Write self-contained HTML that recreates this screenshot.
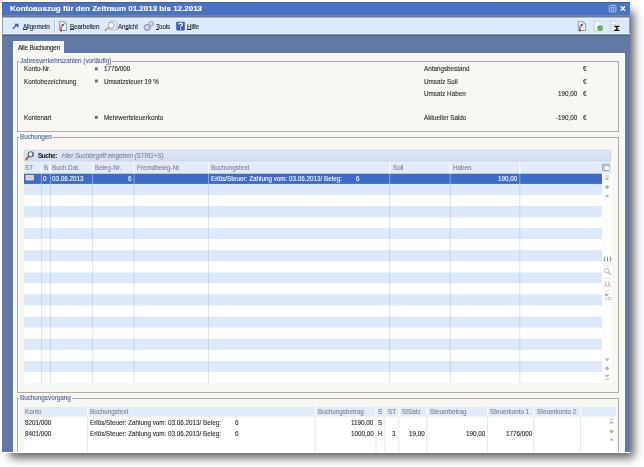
<!DOCTYPE html>
<html><head><meta charset="utf-8">
<style>
html,body{margin:0;padding:0}
body{width:644px;height:467px;background:#fff;position:relative;overflow:hidden;font-family:"Liberation Sans",sans-serif;font-size:6.3px;color:#333}
.a{position:absolute}
.t{position:absolute;white-space:pre;line-height:1;font-size:6.3px;-webkit-text-stroke:0.12px currentColor;will-change:transform}
u{text-decoration-thickness:0.6px;text-underline-offset:0.3px}
.l{-webkit-text-stroke:0.08px currentColor}
</style></head><body>
<div class="a" style="left:10px;top:11px;width:624px;height:447px;background:rgba(0,0,0,.62);filter:blur(5px)"></div>
<div class="a" style="left:2px;top:2px;width:628px;height:451px;background:#6279a8;"></div>
<div class="a" style="left:2px;top:452px;width:628px;height:1px;background:#fbfbfb;"></div>
<div class="a" style="left:2px;top:2px;width:628px;height:14px;background:linear-gradient(#4873c8,#4a72c5);"></div>
<div class="a" style="left:2px;top:2px;width:628px;height:1px;background:#4062ac;"></div>
<div class="a" style="left:2px;top:15px;width:628px;height:1px;background:#6a84bd;"></div>
<div class="a" style="left:2px;top:16px;width:628px;height:1px;background:#687a9f;"></div>
<div class="a" style="left:2px;top:17px;width:628px;height:1px;background:#a2b1c9;"></div>
<div class="t" style="top:5.13px;left:10.00px;font-size:8px;color:#fff;font-weight:bold;">Kontoauszug für den Zeitraum 01.2013 bis 12.2013</div>
<div class="a" style="left:2px;top:18px;width:628px;height:16px;background:#dcebfb;"></div>
<div class="a" style="left:2px;top:18px;width:628px;height:1px;background:#e9f5fd;"></div>
<div class="a" style="left:2px;top:17px;width:1px;height:19px;background:#8d9dc4;"></div>
<div class="a" style="left:629px;top:17px;width:1px;height:19px;background:#8d9dc4;"></div>
<div class="a" style="left:2px;top:33px;width:628px;height:1px;background:#eef7fe;"></div>
<div class="a" style="left:2px;top:34px;width:628px;height:1px;background:#7f93bb;"></div>
<div class="a" style="left:2px;top:35px;width:628px;height:1px;background:#4d6594;"></div>
<div class="a" style="left:54px;top:19px;width:1px;height:13px;background:#b3bfd3;"></div>
<div class="a" style="left:55px;top:19px;width:1px;height:13px;background:#f5f9ff;"></div>
<div class="t" style="top:23.57px;left:22.80px;color:#2a2a2a;letter-spacing:-0.12px;"><u>A</u>llgemein</div>
<div class="t" style="top:23.57px;left:70.00px;color:#2a2a2a;letter-spacing:-0.12px;"><u>B</u>earbeiten</div>
<div class="t" style="top:23.57px;left:118.00px;color:#2a2a2a;letter-spacing:-0.12px;">An<u>s</u>icht</div>
<div class="t" style="top:23.57px;left:156.30px;color:#2a2a2a;letter-spacing:-0.12px;"><u>T</u>ools</div>
<div class="t" style="top:23.57px;left:187.20px;color:#2a2a2a;letter-spacing:-0.12px;"><u>H</u>ilfe</div>
<div class="a" style="left:13px;top:41px;width:51px;height:13px;background:#f8f7f2;border-top:1px solid #fff;border-left:1px solid #fff;box-sizing:border-box"></div>
<div class="t" style="top:45.17px;left:18.20px;color:#222;letter-spacing:-0.15px;">Alle Buchungen</div>
<div class="a" style="left:13px;top:53px;width:611.5px;height:399px;background:#f8f7f2;border-left:1px solid #fdfdfc;border-right:1px solid #fff;box-sizing:border-box"></div>
<div class="a" style="left:64px;top:53px;width:560px;height:1px;background:#fdfdfb;"></div>
<div class="a" style="left:17px;top:61px;width:602px;height:71px;background:transparent;border:1px solid #aeaca4;box-sizing:border-box;"></div>
<div class="t l" style="top:58.17px;left:18.80px;color:#3b5eab;background:#f8f7f2;padding:0 1px 0 1px;">Jahresverkehrszahlen (vorläufig)</div>
<div class="t" style="top:66.27px;left:24.00px;color:#303030;">Konto-Nr.</div>
<div class="t" style="top:66.27px;left:103.60px;color:#303030;">1776/000</div>
<div class="t" style="top:79.07px;left:24.00px;color:#303030;">Kontobezeichnung</div>
<div class="t" style="top:79.07px;left:103.60px;color:#303030;">Umsatzsteuer 19 %</div>
<div class="t" style="top:115.07px;left:24.00px;color:#303030;">Kontenart</div>
<div class="t" style="top:115.07px;left:103.60px;color:#303030;">Mehrwertsteuerkonto</div>
<div class="t" style="top:66.27px;left:424.00px;color:#303030;">Anfangsbestand</div>
<div class="t" style="top:66.27px;left:582.50px;color:#303030;">€</div>
<div class="t" style="top:79.07px;left:424.00px;color:#303030;">Umsatz Soll</div>
<div class="t" style="top:79.07px;left:582.50px;color:#303030;">€</div>
<div class="t" style="top:91.07px;left:424.00px;color:#303030;">Umsatz Haben</div>
<div class="t" style="top:91.07px;left:582.50px;color:#303030;">€</div>
<div class="t" style="top:91.07px;right:67.00px;text-align:right;color:#303030;">190,00</div>
<div class="t" style="top:115.07px;left:424.00px;color:#303030;">Aktueller Saldo</div>
<div class="t" style="top:115.07px;left:582.50px;color:#303030;">€</div>
<div class="t" style="top:115.07px;right:67.00px;text-align:right;color:#303030;">-190,00</div>
<div class="a" style="left:17px;top:137px;width:602px;height:256px;background:transparent;border:1px solid #aeaca4;box-sizing:border-box;"></div>
<div class="t l" style="top:134.17px;left:18.60px;color:#3b5eab;background:#f8f7f2;padding:0 1px 0 1px;">Buchungen</div>
<div class="a" style="left:17px;top:398px;width:602px;height:54px;background:transparent;border:1px solid #aeaca4;box-sizing:border-box;border-bottom:none;"></div>
<div class="t l" style="top:395.17px;left:18.70px;color:#3b5eab;background:#f8f7f2;padding:0 1px 0 1px;">Buchungsvorgang</div>
<svg class="a" style="left:0;top:0" width="644" height="467" viewBox="0 0 644 467"><rect x="94.9" y="67.4" width="2.9" height="2.9" fill="#6a6a6a"/><rect x="94.9" y="79.5" width="2.9" height="2.9" fill="#6a6a6a"/><rect x="94.9" y="115.9" width="2.9" height="2.9" fill="#6a6a6a"/><defs><linearGradient id="sg" x1="0" y1="0" x2="0" y2="1"><stop offset="0" stop-color="#dfe8f8"/><stop offset="1" stop-color="#d3def3"/></linearGradient></defs><rect x="24.2" y="150.2" width="586.5" height="10.9" fill="url(#sg)" stroke="#c2d0ea" stroke-width="0.8"/><rect x="602" y="162" width="10" height="221" fill="#fdfdfc"/><rect x="24" y="162.2" width="587" height="11.5" fill="#e0ebfb"/><rect x="24" y="173.7" width="578" height="10.26" fill="#3e6bc7"/><rect x="24" y="183.96" width="578" height="11.057" fill="#dce9fb"/><rect x="24" y="195.01" width="578" height="11.057" fill="#ffffff"/><rect x="24" y="206.07" width="578" height="11.057" fill="#dce9fb"/><rect x="24" y="217.13" width="578" height="11.057" fill="#ffffff"/><rect x="24" y="228.19" width="578" height="11.057" fill="#dce9fb"/><rect x="24" y="239.24" width="578" height="11.057" fill="#ffffff"/><rect x="24" y="250.30" width="578" height="11.057" fill="#dce9fb"/><rect x="24" y="261.36" width="578" height="11.057" fill="#ffffff"/><rect x="24" y="272.41" width="578" height="11.057" fill="#dce9fb"/><rect x="24" y="283.47" width="578" height="11.057" fill="#ffffff"/><rect x="24" y="294.53" width="578" height="11.057" fill="#dce9fb"/><rect x="24" y="305.58" width="578" height="11.057" fill="#ffffff"/><rect x="24" y="316.64" width="578" height="11.057" fill="#dce9fb"/><rect x="24" y="327.70" width="578" height="11.057" fill="#ffffff"/><rect x="24" y="338.75" width="578" height="11.057" fill="#dce9fb"/><rect x="24" y="349.81" width="578" height="11.057" fill="#ffffff"/><rect x="24" y="360.87" width="578" height="11.057" fill="#dce9fb"/><rect x="24" y="371.93" width="578" height="11.057" fill="#ffffff"/><rect x="40.80" y="162.5" width="1.2" height="11" fill="#fdfeff"/><rect x="40.90" y="183.96" width="1" height="199.14" fill="rgba(110,140,195,.22)"/><rect x="40.90" y="173.7" width="1" height="10.26" fill="#86a3dc"/><rect x="49.80" y="162.5" width="1.2" height="11" fill="#fdfeff"/><rect x="49.90" y="183.96" width="1" height="199.14" fill="rgba(110,140,195,.22)"/><rect x="49.90" y="173.7" width="1" height="10.26" fill="#86a3dc"/><rect x="91.85" y="162.5" width="1.2" height="11" fill="#fdfeff"/><rect x="91.95" y="183.96" width="1" height="199.14" fill="rgba(110,140,195,.22)"/><rect x="91.95" y="173.7" width="1" height="10.26" fill="#86a3dc"/><rect x="133.50" y="162.5" width="1.2" height="11" fill="#fdfeff"/><rect x="133.60" y="183.96" width="1" height="199.14" fill="rgba(110,140,195,.22)"/><rect x="133.60" y="173.7" width="1" height="10.26" fill="#86a3dc"/><rect x="207.90" y="162.5" width="1.2" height="11" fill="#fdfeff"/><rect x="208.00" y="183.96" width="1" height="199.14" fill="rgba(110,140,195,.22)"/><rect x="208.00" y="173.7" width="1" height="10.26" fill="#86a3dc"/><rect x="389.00" y="162.5" width="1.2" height="11" fill="#fdfeff"/><rect x="389.10" y="183.96" width="1" height="199.14" fill="rgba(110,140,195,.22)"/><rect x="389.10" y="173.7" width="1" height="10.26" fill="#86a3dc"/><rect x="449.60" y="162.5" width="1.2" height="11" fill="#fdfeff"/><rect x="449.70" y="183.96" width="1" height="199.14" fill="rgba(110,140,195,.22)"/><rect x="449.70" y="173.7" width="1" height="10.26" fill="#86a3dc"/><rect x="519.20" y="162.5" width="1.2" height="11" fill="#fdfeff"/><rect x="519.30" y="183.96" width="1" height="199.14" fill="rgba(110,140,195,.22)"/><rect x="519.30" y="173.7" width="1" height="10.26" fill="#86a3dc"/><rect x="24" y="407" width="592" height="9.8" fill="#e0ebfb"/><rect x="24" y="416.8" width="592" height="36" fill="#ffffff"/><rect x="87.00" y="407.2" width="1.2" height="9.6" fill="#fdfeff"/><rect x="87.10" y="416.8" width="1" height="35.2" fill="#e0e7f3"/><rect x="314.70" y="407.2" width="1.2" height="9.6" fill="#fdfeff"/><rect x="314.80" y="416.8" width="1" height="35.2" fill="#e0e7f3"/><rect x="375.40" y="407.2" width="1.2" height="9.6" fill="#fdfeff"/><rect x="375.50" y="416.8" width="1" height="35.2" fill="#e0e7f3"/><rect x="384.30" y="407.2" width="1.2" height="9.6" fill="#fdfeff"/><rect x="384.40" y="416.8" width="1" height="35.2" fill="#e0e7f3"/><rect x="398.20" y="407.2" width="1.2" height="9.6" fill="#fdfeff"/><rect x="398.30" y="416.8" width="1" height="35.2" fill="#e0e7f3"/><rect x="426.20" y="407.2" width="1.2" height="9.6" fill="#fdfeff"/><rect x="426.30" y="416.8" width="1" height="35.2" fill="#e0e7f3"/><rect x="487.00" y="407.2" width="1.2" height="9.6" fill="#fdfeff"/><rect x="487.10" y="416.8" width="1" height="35.2" fill="#e0e7f3"/><rect x="533.10" y="407.2" width="1.2" height="9.6" fill="#fdfeff"/><rect x="533.20" y="416.8" width="1" height="35.2" fill="#e0e7f3"/><rect x="580.00" y="407.2" width="1.2" height="9.6" fill="#fdfeff"/><rect x="580.10" y="416.8" width="1" height="35.2" fill="#e0e7f3"/></svg>
<div class="t l" style="top:165.07px;left:25.40px;color:#7b7f87;">ST</div>
<div class="t l" style="top:165.07px;left:43.80px;color:#7b7f87;">B</div>
<div class="t l" style="top:165.07px;left:52.20px;color:#7b7f87;">Buch.Dat.</div>
<div class="t l" style="top:165.07px;left:95.00px;color:#7b7f87;">Beleg-Nr.</div>
<div class="t l" style="top:165.07px;left:137.20px;color:#7b7f87;">Fremdbeleg-Nr.</div>
<div class="t l" style="top:165.07px;left:211.00px;color:#7b7f87;">Buchungstext</div>
<div class="t l" style="top:165.07px;left:393.00px;color:#7b7f87;">Soll</div>
<div class="t l" style="top:165.07px;left:452.70px;color:#7b7f87;">Haben</div>
<div class="t l" style="top:152.57px;left:38.30px;color:#1e1e1e;font-weight:bold;letter-spacing:-0.35px;">Suche:</div>
<div class="t l" style="top:152.57px;left:62.00px;color:#7a8297;font-style:italic;letter-spacing:-0.08px;">Hier Suchbegriff eingeben (STRG+S)</div>
<div class="t l" style="top:175.67px;left:43.00px;color:#ffffff;">0</div>
<div class="t l" style="top:175.67px;left:51.50px;color:#ffffff;">03.06.2013</div>
<div class="t l" style="top:175.67px;right:512.30px;text-align:right;color:#ffffff;">6</div>
<div class="t l" style="top:175.67px;left:211.00px;color:#ffffff;">Erlös/Steuer: Zahlung vom: 03.06.2013/ Beleg:</div>
<div class="t l" style="top:175.67px;left:356.20px;color:#ffffff;">6</div>
<div class="t l" style="top:175.67px;right:127.00px;text-align:right;color:#ffffff;">190,00</div>
<div class="t l" style="top:408.87px;left:25.30px;color:#7b7f87;">Konto</div>
<div class="t l" style="top:408.87px;left:89.70px;color:#7b7f87;">Buchungstext</div>
<div class="t l" style="top:408.87px;left:317.70px;color:#7b7f87;">Buchungsbetrag</div>
<div class="t l" style="top:408.87px;left:378.40px;color:#7b7f87;">S</div>
<div class="t l" style="top:408.87px;left:387.60px;color:#7b7f87;">ST</div>
<div class="t l" style="top:408.87px;left:401.60px;color:#7b7f87;">StSatz</div>
<div class="t l" style="top:408.87px;left:429.50px;color:#7b7f87;">Steuerbetrag</div>
<div class="t l" style="top:408.87px;left:490.00px;color:#7b7f87;">Steuerkonto 1</div>
<div class="t l" style="top:408.87px;left:536.60px;color:#7b7f87;">Steuerkonto 2</div>
<div class="t" style="top:420.17px;left:25.30px;color:#2e2e2e;">8201/000</div>
<div class="t" style="top:420.17px;left:89.70px;color:#2e2e2e;">Erlös/Steuer: Zahlung vom: 03.06.2013/ Beleg:</div>
<div class="t" style="top:420.17px;left:234.50px;color:#2e2e2e;">6</div>
<div class="t" style="top:420.17px;right:270.40px;text-align:right;color:#2e2e2e;">1190,00</div>
<div class="t" style="top:420.17px;left:378.00px;color:#2e2e2e;">S</div>
<div class="t" style="top:430.87px;left:25.30px;color:#2e2e2e;">8401/000</div>
<div class="t" style="top:430.87px;left:89.70px;color:#2e2e2e;">Erlös/Steuer: Zahlung vom: 03.06.2013/ Beleg:</div>
<div class="t" style="top:430.87px;left:234.50px;color:#2e2e2e;">6</div>
<div class="t" style="top:430.87px;right:270.40px;text-align:right;color:#2e2e2e;">1000,00</div>
<div class="t" style="top:430.87px;left:378.00px;color:#2e2e2e;">H</div>
<div class="t" style="top:430.87px;right:248.00px;text-align:right;color:#2e2e2e;">3</div>
<div class="t" style="top:430.87px;right:219.20px;text-align:right;color:#2e2e2e;">19,00</div>
<div class="t" style="top:430.87px;right:159.00px;text-align:right;color:#2e2e2e;">190,00</div>
<div class="t" style="top:430.87px;right:112.10px;text-align:right;color:#2e2e2e;">1776/000</div>
<svg class="a" style="left:0;top:0" width="644" height="467" viewBox="0 0 644 467">
<!-- Allgemein arrow -->
<path d="M12.9 28.7 L16.6 25" stroke="#3d5ca8" stroke-width="1.3" fill="none"/>
<path d="M14.2 23.7 L18.5 23.7 L18.5 28 Z" fill="#3d5ca8"/>
<!-- Bearbeiten icon -->
<path d="M59.6 21.6 H64.4 L66.6 23.8 V30.4 H59.6 Z" fill="#f2f5fb" stroke="#8392b2" stroke-width="0.9"/>
<path d="M64.4 21.6 V23.8 H66.6" fill="none" stroke="#8392b2" stroke-width="0.6"/>
<path d="M60.9 30.6 Q60.4 27.2 62.4 25.4" stroke="#d2907c" stroke-width="2.1" fill="none"/>
<circle cx="62.9" cy="24.9" r="1.05" fill="#4b5359"/>
<circle cx="61" cy="30.5" r="0.95" fill="#8f2d1a"/>
<!-- Ansicht icon -->
<path d="M109.8 21.1 H114.8 L116.9 23.2 V29.8 H109.8 Z" fill="#e9eef6" stroke="#a3adbf" stroke-width="0.8"/>
<circle cx="111.3" cy="25.4" r="2.9" fill="#f8faff" stroke="#98a2b4" stroke-width="1"/>
<circle cx="110.6" cy="24.7" r="1.1" fill="#ffffff"/>
<path d="M108.4 28 L105.2 30.3" stroke="#d3a77a" stroke-width="1.7" stroke-linecap="round"/>
<!-- Tools -->
<circle cx="147.3" cy="27.4" r="3.1" fill="#c4bfe0" stroke="#8b85b3" stroke-width="1.2" stroke-dasharray="1.2 0.6"/>
<circle cx="147.1" cy="27.1" r="1.1" fill="#e6e3f4"/>
<circle cx="151.1" cy="23.7" r="2.2" fill="#cdc9e6" stroke="#8b85b3" stroke-width="1.1" stroke-dasharray="0.9 0.5"/>
<circle cx="151" cy="23.5" r="0.8" fill="#f2f0fa"/>
<!-- Hilfe -->
<rect x="176.2" y="21.8" width="8.6" height="8.6" rx="0.8" fill="#3761bd"/>
<path d="M178.8 24.6 C178.8 22.6 182.4 22.6 182.4 24.4 C182.4 25.6 180.6 25.7 180.6 27.2" stroke="#fff" stroke-width="1.2" fill="none"/>
<rect x="180" y="28.1" width="1.2" height="1.2" fill="#fff"/>
<!-- right toolbar icons -->
<path d="M578.3 21.6 H583.3 L585.6 23.9 V30.5 H578.3 Z" fill="#f2f5fb" stroke="#8392b2" stroke-width="0.9"/>
<path d="M583.3 21.6 V23.9 H585.6" fill="none" stroke="#8392b2" stroke-width="0.6"/>
<path d="M579.8 30.6 Q579.3 27.2 581.3 25.4" stroke="#d2907c" stroke-width="2.1" fill="none"/>
<circle cx="581.8" cy="24.9" r="1.05" fill="#4b5359"/>
<circle cx="579.9" cy="30.5" r="0.95" fill="#8f2d1a"/>
<path d="M594.3 21 H600 L602.2 23.2 V30.8 H594.3 Z" fill="#f3f3f5" stroke="#c4c6cc" stroke-width="0.8"/>
<circle cx="600" cy="28.1" r="2.7" fill="#3fa63a"/>
<path d="M598.7 28.1 L599.7 29.1 L601.4 27" stroke="#dff5d8" stroke-width="0.7" fill="none"/>
<path d="M610.3 21 H616 L618 23 V30.8 H610.3 Z" fill="#f3f3f5" stroke="#c4c6cc" stroke-width="0.8"/>
<path d="M611.5 24.5 H616 M611.5 26.5 H614 M611.5 28.5 H614" stroke="#c8c8cc" stroke-width="0.6"/>
<path d="M619.4 26.4 H615.2 L617.4 28.4 L615.2 30.4 H619.4" stroke="#111" stroke-width="1.2" fill="none"/>
<!-- grid1 side icons -->
<rect x="602.6" y="164.3" width="6.6" height="6.4" rx="0.8" fill="#c9ccd1" stroke="#8a8e95" stroke-width="0.7"/>
<rect x="605" y="166.5" width="4.4" height="3.4" rx="0.8" fill="#fdfdfd"/>
<g fill="#b1b4ba" stroke="none">
<rect x="604.8" y="175.6" width="4.6" height="0.8"/>
<path d="M604.6 179.8 L607.1 177.2 L609.6 179.8 Z"/>
<path d="M604.6 187 L607.1 184.8 L609.6 187 L607.1 189.2 Z"/>
<path d="M604.8 197 L607.1 194.4 L609.4 197 Z"/>
<path d="M604.8 358.6 L607.1 361.2 L609.4 358.6 Z"/>
<path d="M604.6 368.4 L607.1 366.2 L609.6 368.4 L607.1 370.6 Z"/>
<path d="M604.6 374.8 L607.1 377.4 L609.6 374.8 Z"/>
<rect x="604.8" y="378.8" width="4.6" height="0.8"/>
</g>
<g stroke="#a9adb3" fill="none">
<path d="M605.3 256.5 C604 258 604 260 605.3 261.4 M609.8 256.5 C611.1 258 611.1 260 609.8 261.4 M607.55 256.5 V261.4" stroke-width="1.1" stroke="#8f939a"/>
<path d="M604 265.4 H611" stroke="#d6d8dc" stroke-width="0.6"/>
<circle cx="606.8" cy="270.5" r="2.3" stroke-width="0.8"/>
<path d="M608.5 272.3 L611 274.9" stroke-width="1.1"/>
<path d="M604 278 H611" stroke="#d6d8dc" stroke-width="0.6"/>
<path d="M604.3 286.8 L605.6 283.2 L606.9 286.8 M607.9 286.8 L609.2 283.2 L610.5 286.8 M604.6 282 H606.6 M608.2 282 H610.2" stroke-width="0.8"/>
<path d="M604 290.4 H611" stroke="#d6d8dc" stroke-width="0.6"/>
<path d="M604.2 294 H609 L606.6 296.6 Z" fill="#9da1a8" stroke="none"/>
<path d="M607.6 297.6 H611 M607.6 299.5 H611 M605.8 297.6 V300" stroke-width="0.8"/>
</g>
<!-- grid3 side icons -->
<g fill="#b1b4ba" stroke="none">
<rect x="609.3" y="418.8" width="4.6" height="0.8"/>
<path d="M609.1 423.4 L611.6 420.8 L614.1 423.4 Z"/>
<path d="M609.1 431.4 L611.6 429.2 L614.1 431.4 L611.6 433.6 Z"/>
<path d="M609.3 440.4 L611.6 437.8 L613.9 440.4 Z"/>
</g>
<!-- search icon -->
<path d="M28.8 156.5 L26.2 159.3" stroke="#9c6c4a" stroke-width="2.1" stroke-linecap="round"/>
<circle cx="30.8" cy="154.3" r="2.6" fill="#fdfdff" stroke="#5d6572" stroke-width="1.1"/>
<path d="M32.2 152.6 A2.6 2.6 0 0 1 32.6 156" stroke="#3d4450" stroke-width="0.8" fill="none"/>
<!-- ST icon -->
<rect x="26" y="175.4" width="7.4" height="4.6" fill="#d9d6cf" stroke="#f4f4f4" stroke-width="0.6"/>
<path d="M27 177.7 H32.4" stroke="#b9b4aa" stroke-width="0.5"/>
<!-- title bar buttons -->
<rect x="609.3" y="5.3" width="6.6" height="6.6" rx="1" fill="none" stroke="#b4c8ee" stroke-width="1"/>
<rect x="611.3" y="7.3" width="2.6" height="2.6" fill="none" stroke="#b4c8ee" stroke-width="0.8"/>
<path d="M620.8 6.3 L625 10.7 M625 6.3 L620.8 10.7" stroke="#f4f7ff" stroke-width="1.3"/>
</svg>
</body></html>
